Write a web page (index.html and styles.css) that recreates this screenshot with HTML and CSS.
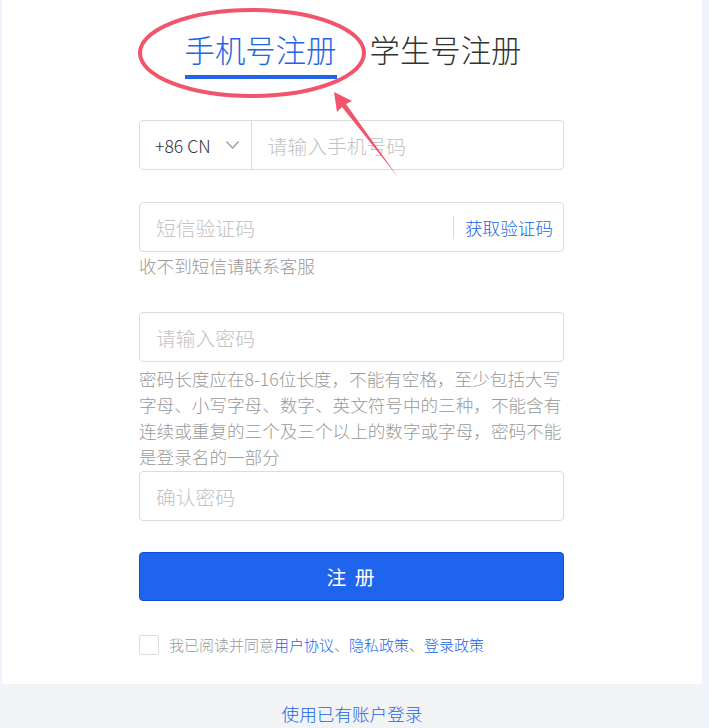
FILE: index.html
```html
<!DOCTYPE html>
<html lang="zh-CN">
<head>
    <meta charset="UTF-8">
    <meta name="viewport" content="width=device-width, initial-scale=1.0">
    <title>注册</title>
    <link rel="stylesheet" href="styles.css">
</head>
<body>
    <div id="panel">
        <div id="tabs">
            <span class="tab active">手机号注册</span>
            <span class="tab">学生号注册</span>
        </div>

        <div id="regform">
            <div class="field">
                <div class="prefix">
                    <span>+86 CN</span>
                    <svg class="chevron" width="13" height="8" viewBox="0 0 13 8"><path d="M0.5 0.5 L6.5 7 L12.5 0.5" fill="none" stroke="#999" stroke-width="1.2"/></svg>
                </div>
                <input type="text" class="inputbox" placeholder="请输入手机号码">
            </div>

            <div class="field gap">
                <input type="text" class="inputbox" placeholder="短信验证码">
                <span class="getcode">获取验证码</span>
            </div>
            <p class="hint">收不到短信请联系客服</p>

            <div class="field gap2">
                <input type="password" class="inputbox" placeholder="请输入密码">
            </div>
            <p class="hint pwdhint">密码长度应在8-16位长度，不能有空格，至少包括大写字母、小写字母、数字、英文符号中的三种，不能含有连续或重复的三个及三个以上的数字或字母，密码不能是登录名的一部分</p>

            <div class="field">
                <input type="password" class="inputbox" placeholder="确认密码">
            </div>

            <div id="btn">注 册</div>

            <div id="agree">
                <span class="checkbox"></span>
                <span>我已阅读并同意<a href="#">用户协议</a>、<a href="#">隐私政策</a>、<a href="#">登录政策</a></span>
            </div>
        </div>

        <div id="footer"><a href="#">使用已有账户登录</a></div>

        <!-- annotation drawn over the page -->
        <svg id="mark" width="700" height="200" viewBox="0 0 700 200">
            <ellipse cx="252" cy="53" rx="112" ry="43" fill="none" stroke="#f2546b" stroke-width="4"/>
            <polygon points="334,92 352,101 346,104 398,177 342,107 337,112" fill="#f2546b"/>
        </svg>
    </div>
</body>
</html>
```

FILE: styles.css
```css
body{
    margin: 0;
    background-color: #eef3fd;
    font-family: "Noto Sans CJK SC", "Noto Sans", sans-serif;
    font-weight: 300;
}

#panel{
    position: relative;
    margin-left: 2px;
    width: 700px;
    background-color: #fff;
}

#tabs{
    display: flex;
    justify-content: center;
    gap: 33px;
    padding-top: 29px;
    padding-left: 2px;
}

.tab{
    font-size: 30.4px;
    line-height: 40px;
    color: #333;
    padding-bottom: 6px;
    border-bottom: 4px solid transparent;
}

.tab.active{
    color: #2264e8;
    border-bottom-color: #2264e8;
}

#regform{
    width: 425px;
    margin: 41px 0 0 137px;
}

.field{
    display: flex;
    align-items: center;
    height: 48px;
    border: 1px solid #dcdcdc;
    border-radius: 4px;
}

.gap{
    margin-top: 32px;
}

.gap2{
    margin-top: 33px;
}

.prefix{
    display: flex;
    align-items: center;
    height: 100%;
    padding: 0 12px 0 15px;
    border-right: 1px solid #dcdcdc;
    font-size: 17.6px;
    color: #333;
}

.chevron{
    margin-left: 15px;
}

.inputbox{
    flex: 1;
    min-width: 0;
    border: none;
    outline: none;
    background: transparent;
    padding: 0 16px;
    height: 100%;
    font-family: inherit;
    font-weight: 300;
    font-size: 19.8px;
    color: #333;
}

.inputbox::placeholder{
    color: #c2c2c2;
}

.getcode{
    border-left: 1px solid #dcdcdc;
    padding-left: 11px;
    margin-right: 10px;
    line-height: 23px;
    font-size: 17.6px;
    color: #2264e8;
}

.hint{
    margin: 1px 0 0;
    font-size: 17.6px;
    line-height: 26px;
    color: #999;
}

.pwdhint{
    margin: 4px 0 1px;
}

#btn{
    margin-top: 31px;
    height: 47px;
    line-height: 47px;
    border: 1px solid #0b50dd;
    border-radius: 4px;
    background-color: #1f64ec;
    color: #fff;
    text-align: center;
    font-size: 19.8px;
    font-weight: 400;
    letter-spacing: 2px;
}

#agree{
    display: flex;
    align-items: center;
    margin-top: 33px;
    font-size: 15px;
    color: #999;
}

.checkbox{
    width: 18px;
    height: 18px;
    border: 1px solid #dcdcdc;
    border-radius: 2px;
    margin-right: 10px;
}

a{
    color: #2264e8;
    text-decoration: none;
}

#footer{
    margin-top: 29px;
    height: 60px;
    padding-top: 17px;
    background-color: #f2f3f5;
    text-align: center;
    font-size: 17.6px;
    line-height: 26px;
}

#mark{
    position: absolute;
    left: -2px;
    top: 0;
}
```
